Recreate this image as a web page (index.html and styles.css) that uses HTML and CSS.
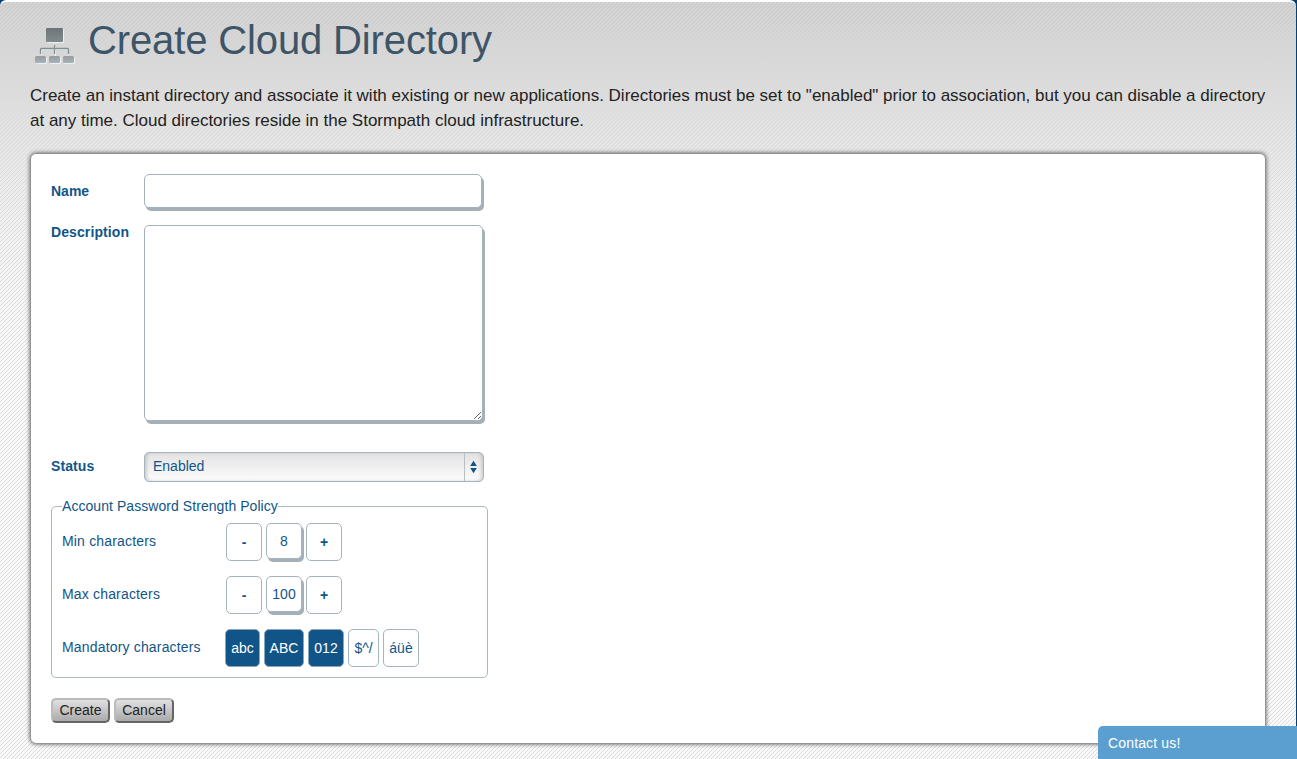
FILE: index.html
```html
<!DOCTYPE html>
<html lang="en">
<head>
<meta charset="utf-8">
<title>Create Cloud Directory</title>
<link rel="stylesheet" href="styles.css">
</head>
<body>
<main class="page">
  <header class="page-header">
    <svg class="directory-icon" width="40" height="38" viewBox="0 0 40 38" aria-hidden="true">
      <defs>
        <linearGradient id="top" x1="0" y1="0" x2="0" y2="1"><stop offset="0" stop-color="#6d7579"/><stop offset="1" stop-color="#82898d"/></linearGradient>
        <linearGradient id="leaf" x1="0" y1="0" x2="0" y2="1"><stop offset="0" stop-color="#949da2"/><stop offset="1" stop-color="#a9b1b6"/></linearGradient>
      </defs>
      <g fill="#edf0f1"><rect x="12" y="2" width="17" height="14" rx="1"/><rect x="1" y="30" width="11" height="7" rx="1.5"/><rect x="15" y="30" width="11" height="7" rx="1.5"/><rect x="29" y="30" width="11" height="7" rx="1.5"/></g>
      <rect x="11" y="1" width="17" height="14" rx="1" fill="url(#top)"/>
      <path d="M6.500 27v-4.500q0-1 1-1h25q1 0 1 1V27M20.500 19v9" transform="translate(0 1)" fill="none" stroke="#edf0f1"/>
      <path d="M5.500 27v-4.500q0-1 1-1h26q1 0 1 1V27M19.500 18v9" fill="none" stroke="#828f94" stroke-width="1.300"/>
      <g fill="url(#leaf)"><rect x="0" y="29" width="11" height="7" rx="1.500"/><rect x="14" y="29" width="11" height="7" rx="1.500"/><rect x="28" y="29" width="11" height="7" rx="1.500"/></g>
    </svg>
    <h1>Create Cloud Directory</h1>
  </header>
  <p class="intro">Create an instant directory and associate it with existing or new applications. Directories must be set to "enabled" prior to association, but you can disable a directory<br>at any time. Cloud directories reside in the Stormpath cloud infrastructure.</p>
  <form class="panel">
    <div class="row name-row"><label for="name">Name</label><input id="name" class="field" type="text"></div>
    <div class="row desc-row"><label for="description">Description</label><textarea id="description" class="field"></textarea></div>
    <div class="row status-row"><label>Status</label>
      <div class="select"><span>Enabled</span><svg class="arrows" width="19" height="28" viewBox="0 0 19 28"><path d="M5.500 13h7L9 7.500zM5.500 15h7L9 20.500z" fill="#115588"/></svg></div>
    </div>
    <fieldset class="policy">
      <legend>Account Password Strength Policy</legend>
      <div class="rule"><span class="rule-name">Min characters</span><button type="button" class="step">-</button><span class="value">8</span><button type="button" class="step">+</button></div>
      <div class="rule"><span class="rule-name">Max characters</span><button type="button" class="step">-</button><span class="value">100</span><button type="button" class="step">+</button></div>
      <div class="rule"><span class="rule-name">Mandatory characters</span><div class="sets"><button type="button" class="set on lower">abc</button><button type="button" class="set on upper">ABC</button><button type="button" class="set on digit">012</button><button type="button" class="set symbol">$^/</button><button type="button" class="set accent">áüè</button></div></div>
    </fieldset>
    <div class="actions"><button type="button" class="action create">Create</button><button type="button" class="action cancel">Cancel</button></div>
  </form>
</main>
<a class="contact">Contact us!</a>
</body>
</html>
```
FILE: styles.css
```css
* { box-sizing: border-box; }
html, body { height: 100%; }
body {
  margin: 0;
  padding-right: 1px;
  overflow: hidden;
  background: #034076;
  color: #222;
  font-family: "Liberation Sans", Arial, sans-serif;
}
button, input, textarea { font-family: inherit; }
.page {
  /* One coloured pixel in the corner of each 4px tile. */
  --dot: conic-gradient(from 0deg at 1px 1px, transparent 270deg, #dadada 0);
  height: 759px;
  padding: 17px 31px 0 30px;
  border-top: 2px solid #fff;
  border-radius: 6px 6px 0 0;
  background:
    var(--dot) 0 3px / 4px 4px,
    var(--dot) 1px 2px / 4px 4px,
    var(--dot) 2px 1px / 4px 4px,
    var(--dot) 3px 0 / 4px 4px,
    linear-gradient(#cdcdcd 0, #dadada 75px, #e9e9e9 160px, #f3f3f3 240px, #fafafa 360px);
}
.page-header { display: flex; height: 64px; padding-left: 5px; }
.directory-icon { margin: 8px 13px 0 0; }
h1 {
  margin: 0;
  color: #3d5567;
  font-size: 40px;
  font-weight: 400;
  line-height: 43px;
  letter-spacing: -0.13px;
  white-space: nowrap;
}
.intro { margin: 0 0 21px; font-size: 17px; line-height: 25px; letter-spacing: -0.008px; white-space: nowrap; }
.panel {
  width: 1234px;
  height: 589px;
  margin-left: 1px;
  padding: 20px;
  border-radius: 5px;
  background: #fff;
  box-shadow: 0 0 4px 1px #555;
  color: #115588;
  font-size: 14px;
}
.row { display: flex; }
.row label { width: 93px; font-weight: 700; line-height: 16px; letter-spacing: 0.1px; }
.field {
  display: block;
  margin: 0;
  padding: 4px 8px;
  border: 1px solid #a5b3bc;
  border-radius: 5px;
  background: #fff;
  outline: 0;
}
.name-row { height: 51px; }
.name-row label { padding-top: 9px; letter-spacing: 0; }
.name-row .field { width: 338px; height: 34px; box-shadow: 2px 3px 0 #a5afb7; }
.desc-row { height: 227px; }
.desc-row label { margin-top: -1px; }
.desc-row .field { width: 339px; height: 196px; box-shadow: 2px 3px 0 #a5afb7; }
.status-row { height: 46px; }
.status-row label { padding-top: 6px; }
.select {
  display: flex;
  justify-content: space-between;
  width: 340px;
  height: 30px;
  padding-left: 8px;
  border: 1px solid #a5b5be;
  border-radius: 5px;
  background: linear-gradient(#e3e3e3, #fcfcfc);
  box-shadow: inset 3px 0 4px -2px #bbb, inset -3px 0 4px -2px #bbb;
  line-height: 27px;
}
.arrows { border-left: 1px solid #b9c0c4; }
.policy {
  width: 437px;
  height: 180px;
  margin: 0;
  padding: 9px 10px 0;
  border: 1px solid #a9b8c1;
  border-radius: 5px;
}
.policy legend { padding: 0; line-height: 16px; letter-spacing: 0.06px; }
.rule { display: flex; height: 53px; }
.rule-name { width: 164px; padding-top: 10px; line-height: 16px; letter-spacing: 0.17px; }
.step, .value, .set {
  display: flex;
  align-items: center;
  justify-content: center;
  height: 38px;
  padding: 0;
  border: 1px solid #a5b5be;
  border-radius: 5px;
  background: #fff;
  color: #115588;
  font-size: 14px;
}
.step { width: 36px; font-weight: 700; }
.value { width: 36px; height: 36px; margin: 0 4px; box-shadow: 2px 3px 0 #a5afb7; }
.sets { display: flex; gap: 4px; margin-left: -1px; }
.set.on { border-color: #8ba6b9; background: #115588; color: #fff; }
.lower { width: 35px; }
.upper { width: 40px; }
.digit { width: 36px; }
.symbol { width: 31px; }
.accent { width: 36px; }
.actions { display: flex; gap: 4px; margin-top: 20px; }
.action {
  height: 25px;
  padding: 0 0 2px;
  border: 2px solid;
  border-color: #bbb #666 #666 #bbb;
  border-radius: 5px;
  background: linear-gradient(#e1e1e1, #aaa);
  color: #222;
  font-size: 14px;
}
.create { width: 59px; }
.cancel { width: 60px; }
.contact {
  position: fixed;
  right: 0;
  bottom: 0;
  width: 199px;
  height: 33px;
  padding-left: 10px;
  border-radius: 5px 0 0;
  background: #5b9fd1;
  color: #fff;
  font-size: 14px;
  line-height: 34px;
  letter-spacing: 0.15px;
}
```
